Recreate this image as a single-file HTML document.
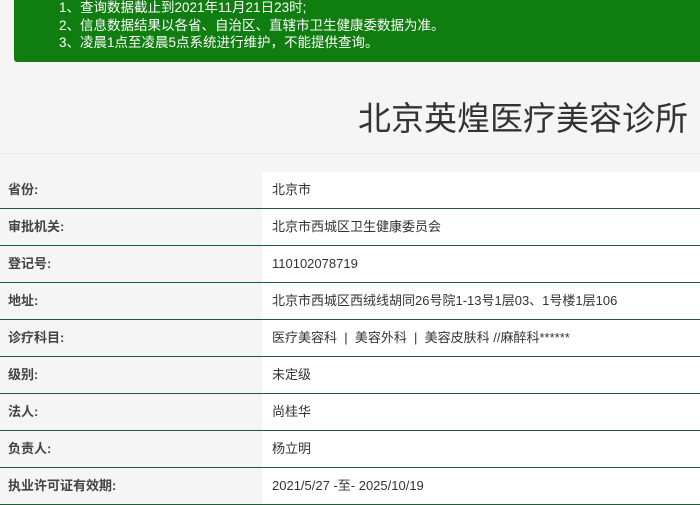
<!DOCTYPE html>
<html><head><meta charset="utf-8"><style>
body{margin:0;width:700px;height:501px;overflow:hidden;background:#f5f5f5;font-family:"Liberation Sans","Noto Sans CJK SC",sans-serif;position:relative}
.g{position:absolute;left:14px;top:-4px;width:690px;height:66px;background:#0f7d0f;border-radius:3px;color:#fff;font-size:13.5px;line-height:17.5px;box-sizing:border-box;padding:3px 0 0 45px}
.t{position:absolute;right:12px;top:98px;font-size:33px;color:#333;line-height:42px}
.hl{position:absolute;left:0;top:153px;width:700px;height:1px;background:#ebebeb}
.tb{position:absolute;left:0;top:172px;width:700px}
.r{height:36px;border-bottom:1px solid #1e5a36;display:flex;font-size:13px;line-height:36px;color:#333}
.r .l{width:262px;padding-left:8px;box-sizing:border-box;font-weight:bold;color:#444}
.r .v{flex:1;background:#fff;padding-left:10px}
</style></head><body>
<div class="g">1、查询数据截止到2021年11月21日23时;<br>2、信息数据结果以各省、自治区、直辖市卫生健康委数据为准。<br>3、凌晨1点至凌晨5点系统进行维护，不能提供查询。</div>
<div class="t">北京英煌医疗美容诊所</div>
<div class="hl"></div>
<div class="tb">
<div class="r"><div class="l">省份:</div><div class="v">北京市</div></div>
<div class="r"><div class="l">审批机关:</div><div class="v">北京市西城区卫生健康委员会</div></div>
<div class="r"><div class="l">登记号:</div><div class="v">110102078719</div></div>
<div class="r"><div class="l">地址:</div><div class="v">北京市西城区西绒线胡同26号院1-13号1层03、1号楼1层106</div></div>
<div class="r"><div class="l">诊疗科目:</div><div class="v">医疗美容科 &nbsp;| &nbsp;美容外科 &nbsp;| &nbsp;美容皮肤科 //麻醉科******</div></div>
<div class="r"><div class="l">级别:</div><div class="v">未定级</div></div>
<div class="r"><div class="l">法人:</div><div class="v">尚桂华</div></div>
<div class="r"><div class="l">负责人:</div><div class="v">杨立明</div></div>
<div class="r"><div class="l">执业许可证有效期:</div><div class="v">2021/5/27 -至- 2025/10/19</div></div>
</div>
</body></html>
